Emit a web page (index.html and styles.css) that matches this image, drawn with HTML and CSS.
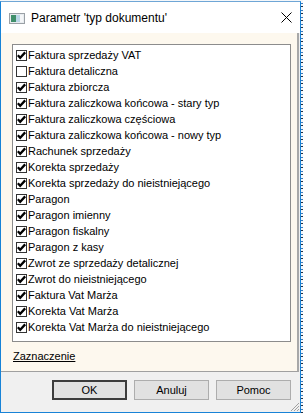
FILE: index.html
```html
<!DOCTYPE html>
<html lang="pl">
<head>
    <meta charset="UTF-8">
    <title>Parametr 'typ dokumentu'</title>
    <link rel="stylesheet" href="styles.css">
</head>
<body>
    <svg class="defs" width="0" height="0">
        <symbol id="chk" viewBox="0 0 9 9">
            <path d="M0.8 4.2 L3.2 6.8 L8.2 1.4" fill="none" stroke="#000" stroke-width="2.3"/>
        </symbol>
    </svg>

    <div class="window">
        <!-- Title bar -->
        <div class="titlebar">
            <svg class="app-icon" width="16" height="11" viewBox="0 0 16 11">
                <rect x="0.5" y="0.5" width="15" height="10" fill="#e8ecef" stroke="#9aa0a6"/>
                <rect x="2" y="2" width="5" height="7" fill="#3f8f6a"/>
                <rect x="7" y="2" width="4" height="7" fill="#b9d6e6"/>
                <rect x="11" y="2" width="3" height="7" fill="#f4f6f8"/>
            </svg>
            <span class="title">Parametr 'typ dokumentu'</span>
            <svg class="close" width="11" height="11" viewBox="0 0 11 11">
                <path d="M0.5 0.5 L10.5 10.5 M10.5 0.5 L0.5 10.5" stroke="#000" stroke-width="1"/>
            </svg>
        </div>

        <!-- Client area -->
        <div class="client">
            <div class="listbox">
                <div class="item"><span class="box"><svg><use href="#chk"/></svg></span>Faktura sprzedaży VAT</div>
                <div class="item"><span class="box"></span>Faktura detaliczna</div>
                <div class="item"><span class="box"><svg><use href="#chk"/></svg></span>Faktura zbiorcza</div>
                <div class="item"><span class="box"><svg><use href="#chk"/></svg></span>Faktura zaliczkowa końcowa - stary typ</div>
                <div class="item"><span class="box"><svg><use href="#chk"/></svg></span>Faktura zaliczkowa częściowa</div>
                <div class="item"><span class="box"><svg><use href="#chk"/></svg></span>Faktura zaliczkowa końcowa - nowy typ</div>
                <div class="item"><span class="box"><svg><use href="#chk"/></svg></span>Rachunek sprzedaży</div>
                <div class="item"><span class="box"><svg><use href="#chk"/></svg></span>Korekta sprzedaży</div>
                <div class="item"><span class="box"><svg><use href="#chk"/></svg></span>Korekta sprzedaży do nieistniejącego</div>
                <div class="item"><span class="box"><svg><use href="#chk"/></svg></span>Paragon</div>
                <div class="item"><span class="box"><svg><use href="#chk"/></svg></span>Paragon imienny</div>
                <div class="item"><span class="box"><svg><use href="#chk"/></svg></span>Paragon fiskalny</div>
                <div class="item"><span class="box"><svg><use href="#chk"/></svg></span>Paragon z kasy</div>
                <div class="item"><span class="box"><svg><use href="#chk"/></svg></span>Zwrot ze sprzedaży detalicznej</div>
                <div class="item"><span class="box"><svg><use href="#chk"/></svg></span>Zwrot do nieistniejącego</div>
                <div class="item"><span class="box"><svg><use href="#chk"/></svg></span>Faktura Vat Marża</div>
                <div class="item"><span class="box"><svg><use href="#chk"/></svg></span>Korekta Vat Marża</div>
                <div class="item"><span class="box"><svg><use href="#chk"/></svg></span>Korekta Vat Marża do nieistniejącego</div>
            </div>
            <a class="link" href="#">Zaznaczenie</a>
        </div>

        <!-- Buttons -->
        <div class="footer">
            <button class="btn btn-default">OK</button>
            <button class="btn">Anuluj</button>
            <button class="btn">Pomoc</button>
            <svg class="grip" width="10" height="10" viewBox="0 0 10 10">
                <path d="M9 1 L1 9 M9 4 L4 9 M9 7 L7 9" stroke="#a0a0a0" stroke-width="1"/>
            </svg>
        </div>
    </div>
</body>
</html>
```

FILE: styles.css
```css
/* Windows style dialog */
body {
    margin: 0;
    width: 303px;
    height: 413px;
    overflow: hidden;
    font-family: "Liberation Sans", Arial, sans-serif;
    background-color: #f4f7fa;
    background-image: repeating-linear-gradient(180deg, #f4f7fa 0 3px, #3b78b8 3px 4px, #f4f7fa 4px 6px, #1f2f45 6px 7px);
}
.defs {
    position: absolute;
}
.window {
    width: 299px;
    height: 410px;
    margin-top: 1px;
    border: 1px solid #1883d7;
    border-top-color: #6fa6d6;
    display: flex;
    flex-direction: column;
    background: #f0f0f0;
}
.titlebar {
    height: 31px;
    flex: none;
    display: flex;
    align-items: center;
    background: #ffffff;
    padding-left: 8px;
    padding-right: 8px;
}
.app-icon {
    margin-right: 6px;
    margin-top: 1px;
}
.title {
    font-size: 12px;
    color: #000;
    flex: 1;
}
.client {
    flex: none;
    height: 339px;
    box-sizing: border-box;
    background: #fdf8ee;
    border-right: 2px solid #a8a8a8;
    margin-right: 1px;
    border-bottom: 1px solid #a0a0a0;
    padding: 11px 0 0 11px;
}
.listbox {
    width: 279px;
    height: 298px;
    box-sizing: border-box;
    border: 1px solid #8c8c8c;
    background: #ffffff;
    padding: 2px 0 0 3px;
}
.item {
    height: 16px;
    display: flex;
    align-items: center;
    font-size: 11px;
    color: #000;
    white-space: nowrap;
}
.box {
    width: 11px;
    height: 11px;
    box-sizing: border-box;
    border: 1px solid #333333;
    background: #ffffff;
    margin-right: 1px;
    display: flex;
    align-items: center;
    justify-content: center;
}
.box svg {
    width: 9px;
    height: 9px;
}
.link {
    display: inline-block;
    margin-top: 8px;
    margin-left: 1px;
    font-size: 11px;
    color: #000;
    text-decoration: underline;
}
.footer {
    flex: 1;
    display: flex;
    justify-content: flex-end;
    align-items: flex-start;
    gap: 7px;
    padding: 8px 9px 0 0;
    position: relative;
}
.btn {
    width: 75px;
    height: 20px;
    font-family: "Liberation Sans", Arial, sans-serif;
    font-size: 11px;
    color: #000;
    background: #e1e1e1;
    border: 1px solid #adadad;
    padding: 0;
}
.btn-default {
    border: 2px solid #3c3c3c;
}
.grip {
    position: absolute;
    right: 0;
    bottom: 0;
}
```
